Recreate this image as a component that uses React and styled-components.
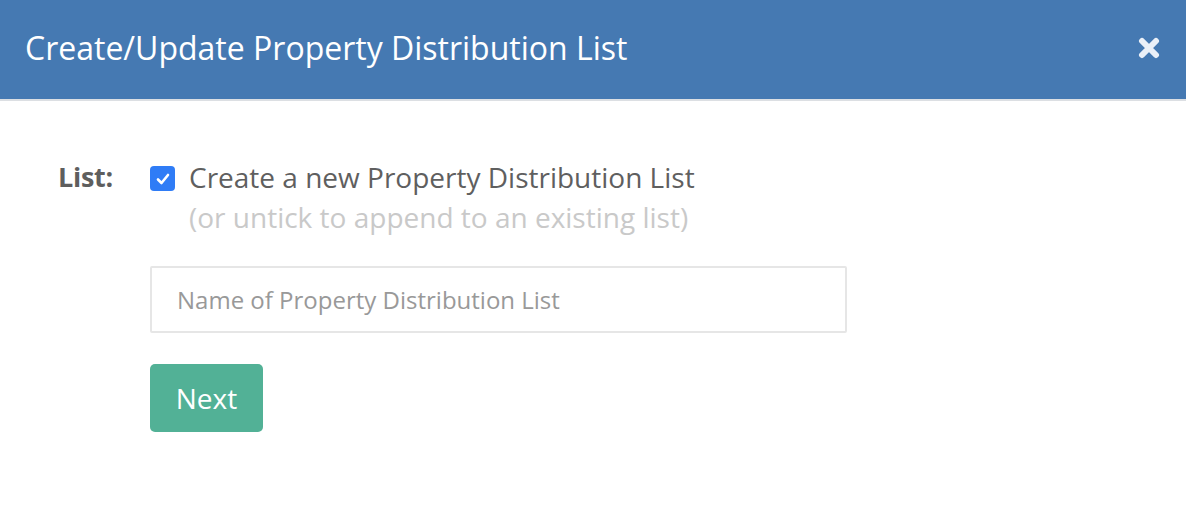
import React from "react";
import styled, { createGlobalStyle } from "styled-components";

const Global = createGlobalStyle`
  html, body { margin: 0; padding: 0; background: #fff; }
  body { font-family: "Open Sans", "Noto Sans", sans-serif; }
  * { box-sizing: border-box; }
`;

const Modal = styled.div`
  width: 1186px;
  height: 516px;
  background: #fff;
`;

const Header = styled.div`
  height: 101px;
  background: #4579b2;
  border-bottom: 2px solid #dcdfe3;
  display: flex;
  align-items: center;
  justify-content: space-between;
  padding: 0 26px 4px 25px;
`;

const Title = styled.h1`
  margin: 0;
  font-size: 32px;
  font-weight: 400;
  color: #fff;
`;

const Close = styled.button`
  border: 0;
  background: none;
  padding: 0;
  width: 22px;
  height: 22px;
  display: flex;
  cursor: pointer;
`;

const Body = styled.div`
  padding: 56px 0 0 58px;
  display: grid;
  grid-template-columns: 92px 697px;
`;

const Label = styled.div`
  font-size: 27px;
  font-weight: 700;
  color: #5e5e5e;
  line-height: 40px;
  letter-spacing: -0.3px;
`;

const Field = styled.div`
  display: flex;
  flex-direction: column;
`;

const CheckRow = styled.label`
  display: flex;
  align-items: flex-start;
  gap: 14px;
`;

const Box = styled.span`
  width: 25px;
  height: 25px;
  margin-top: 9px;
  border-radius: 4px;
  background: #2f7cf6;
  display: flex;
  align-items: center;
  justify-content: center;
  flex-shrink: 0;
`;

const CheckText = styled.div`
  display: flex;
  flex-direction: column;
`;

const Main = styled.span`
  font-size: 28px;
  color: #5f5f5f;
  line-height: 40px;
`;

const Hint = styled.span`
  font-size: 28px;
  color: #c9c9c9;
  line-height: 40px;
`;

const Input = styled.input`
  margin-top: 29px;
  width: 697px;
  height: 67px;
  border: 2px solid #e6e6e6;
  border-radius: 2px;
  padding: 0 25px;
  font-family: inherit;
  font-size: 24px;
  color: #555;
  outline: none;
  &::placeholder { color: #999; }
`;

const Button = styled.button`
  margin-top: 31px;
  width: 113px;
  height: 68px;
  border: 0;
  border-radius: 5px;
  background: #52b196;
  color: #fff;
  font-family: inherit;
  font-size: 28px;
  cursor: pointer;
`;

export default function App() {
  return (
    <Modal>
      <Global />
      <Header>
        <Title>Create/Update Property Distribution List</Title>
        <Close aria-label="close">
          <svg width="22" height="22" viewBox="0 0 22 22">
            <path d="M4 4 L18 18 M18 4 L4 18" stroke="#eaf0f8" strokeWidth="6" strokeLinecap="round" />
          </svg>
        </Close>
      </Header>
      <Body>
        <Label>List:</Label>
        <Field>
          <CheckRow>
            <Box>
              <svg width="16" height="16" viewBox="0 0 16 16">
                <path d="M3 8.5 L6.5 12 L13 4" stroke="#fff" strokeWidth="2.6" fill="none" strokeLinecap="round" strokeLinejoin="round" />
              </svg>
            </Box>
            <CheckText>
              <Main>Create a new Property Distribution List</Main>
              <Hint>(or untick to append to an existing list)</Hint>
            </CheckText>
          </CheckRow>
          <Input placeholder="Name of Property Distribution List" />
          <div><Button>Next</Button></div>
        </Field>
      </Body>
    </Modal>
  );
}
